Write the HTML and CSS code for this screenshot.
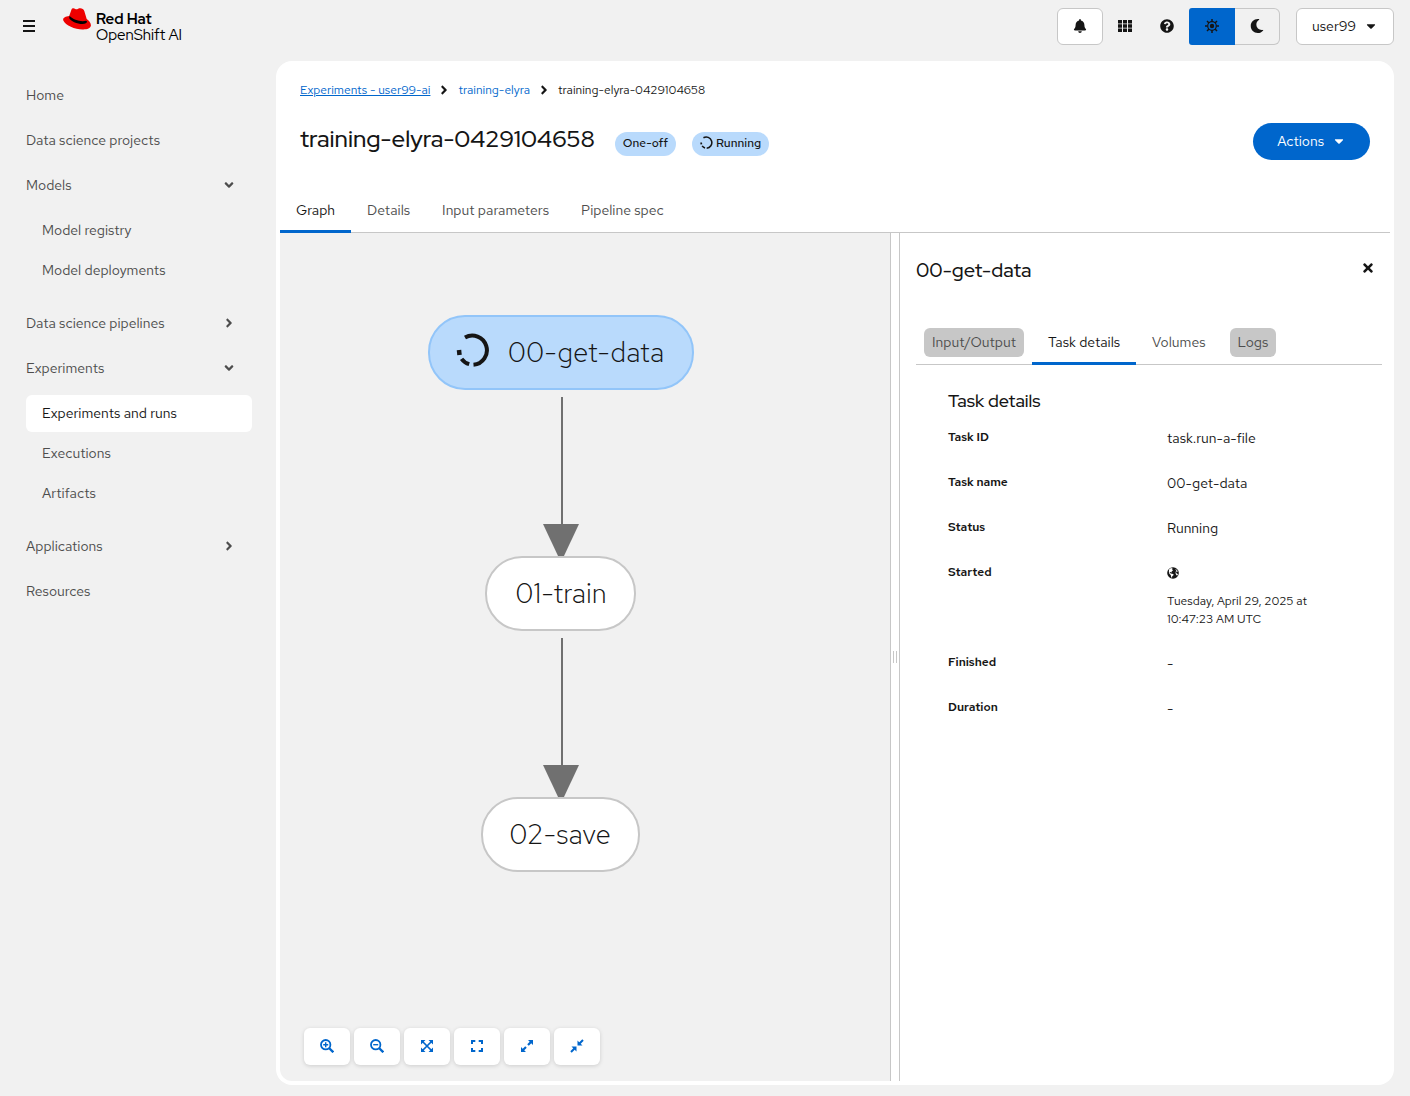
FILE: index.html
```html
<!DOCTYPE html>
<html lang="en">
<head>
    <meta charset="UTF-8">
    <meta name="viewport" content="width=device-width, initial-scale=1.0">
    <title>training-elyra-0429104658 | Red Hat OpenShift AI</title>
    <link rel="stylesheet" href="styles.css">
</head>
<body>
    <!-- icon set -->
    <svg class="sprite" aria-hidden="true">
        <symbol id="i-bars" viewBox="0 0 14 14"><path d="M1 2h12M1 7h12M1 12h12" stroke="currentColor" stroke-width="2"/></symbol>
        <symbol id="i-bell" viewBox="0 0 448 512"><path d="M224 512c35.32 0 63.97-28.65 63.97-64H160.03c0 35.35 28.65 64 63.97 64zm215.39-149.71c-19.32-20.76-55.47-51.99-55.47-154.29 0-77.7-54.48-139.9-127.94-155.16V32c0-17.67-14.32-32-31.98-32s-31.98 14.33-31.98 32v20.84C118.56 68.1 64.08 130.3 64.08 208c0 102.3-36.15 133.53-55.47 154.29-6 6.45-8.66 14.16-8.61 21.71.11 16.4 12.98 32 32.1 32h383.8c19.12 0 32-15.6 32.1-32 .05-7.55-2.61-15.27-8.61-21.71z"/></symbol>
        <symbol id="i-th" viewBox="0 0 14 14"><path d="M0 1h4v3.400H0zM5 1h4v3.400H5zM10 1h4v3.400h-4zM0 5.300h4v3.400H0zM5 5.300h4v3.400H5zM10 5.300h4v3.400h-4zM0 9.600h4V13H0zM5 9.600h4V13H5zM10 9.600h4V13h-4z"/></symbol>
        <symbol id="i-help" viewBox="0 0 512 512"><path d="M504 256c0 136.997-111.043 248-248 248S8 392.997 8 256C8 119.083 119.043 8 256 8s248 111.083 248 248zM262.655 90c-54.497 0-89.255 22.957-116.549 63.758-3.536 5.286-2.353 12.415 2.715 16.258l34.699 26.31c5.205 3.947 12.621 3.008 16.665-2.122 17.864-22.658 30.113-35.797 57.303-35.797 20.429 0 45.698 13.148 45.698 32.958 0 14.976-12.363 22.667-32.534 33.976C247.128 238.528 216 254.941 216 296v4c0 6.627 5.373 12 12 12h56c6.627 0 12-5.373 12-12v-1.333c0-28.462 83.186-29.647 83.186-106.667 0-58.002-60.165-102-116.531-102zM256 338c-25.365 0-46 20.635-46 46 0 25.364 20.635 46 46 46s46-20.636 46-46c0-25.365-20.635-46-46-46z"/></symbol>
        <symbol id="i-sun" viewBox="0 0 14 14"><circle cx="7" cy="7" r="2.200"/><circle cx="7" cy="7" r="4.300" fill="none" stroke="currentColor" stroke-width="1.200"/><path d="M7 0v2.500M7 11.500V14M0 7h2.500M11.500 7H14M2 2l2 2M10 10l2 2M12 2l-2 2M4 10l-2 2" stroke="currentColor" stroke-width="1.500"/></symbol>
        <symbol id="i-moon" viewBox="0 0 512 512"><path d="M283.211 512c78.962 0 151.079-35.925 198.857-94.792 7.068-8.708-.639-21.43-11.562-19.35-124.203 23.654-238.262-71.576-238.262-196.954 0-72.222 38.662-138.635 101.498-174.394 9.686-5.512 7.25-20.197-3.756-22.23A258.156 258.156 0 0 0 283.211 0c-141.309 0-256 114.511-256 256 0 141.309 114.511 256 256 256z"/></symbol>
        <symbol id="i-caret" viewBox="0 0 320 512"><path d="M31.3 192h257.3c17.8 0 26.7 21.5 14.1 34.1L174.1 354.8c-7.8 7.8-20.5 7.8-28.3 0L17.2 226.1C4.6 213.5 13.5 192 31.3 192z"/></symbol>
        <symbol id="i-right" viewBox="0 0 256 512"><path d="M224.3 273l-136 136c-9.4 9.4-24.6 9.4-33.9 0l-22.6-22.6c-9.4-9.4-9.4-24.6 0-33.9l96.4-96.4-96.4-96.4c-9.4-9.4-9.4-24.6 0-33.9L54.3 103c9.4-9.4 24.6-9.4 33.9 0l136 136c9.5 9.4 9.5 24.6.1 34z"/></symbol>
        <symbol id="i-down" viewBox="0 0 320 512"><path d="M143 352.3L7 216.3c-9.4-9.4-9.4-24.6 0-33.9l22.6-22.6c9.4-9.4 24.6-9.4 33.9 0l96.4 96.4 96.4-96.4c9.4-9.4 24.6-9.4 33.9 0l22.6 22.6c9.4 9.4 9.4 24.6 0 33.9l-136 136c-9.2 9.4-24.4 9.4-33.8 0z"/></symbol>
        <symbol id="i-times" viewBox="0 0 352 512"><path d="M242.72 256l100.07-100.07c12.28-12.28 12.28-32.19 0-44.48l-22.24-22.24c-12.28-12.28-32.19-12.28-44.48 0L176 189.28 75.93 89.21c-12.28-12.28-32.19-12.28-44.48 0L9.21 111.45c-12.28 12.28-12.28 32.19 0 44.48L109.28 256 9.21 356.07c-12.28 12.28-12.28 32.19 0 44.48l22.24 22.24c12.28 12.28 32.2 12.28 44.48 0L176 322.72l100.07 100.07c12.28 12.28 32.2 12.28 44.48 0l22.24-22.24c12.28-12.28 12.28-32.19 0-44.48L242.72 256z"/></symbol>
        <symbol id="i-globe" viewBox="0 0 12 12"><circle cx="6" cy="6" r="5.800"/><path d="M2 2.600l2-1.500 1.600.3-.4 1.300 1 .6-1.400 1-.2 1.200-1.400-.6-.6.7 1.200.8 2.400.6.5 1-1.500 1.200-.2 2-1-1.600-.2-1.600-1.300-1.100-.6-2zM8 2l2 1 .9 1.800-1.300-.3-.6 1 1 1.300 1 .2-.6 1.500-1-.2-.8-1.700.1-1.800.8-1z" fill="#fff"/></symbol>
        <symbol id="i-progress" viewBox="0 0 34 34"><g fill="none" stroke="currentColor" stroke-width="4"><path d="M9 4.600a14.600 14.600 0 1 1 8.500 27.200"/><path d="M13.200 31.200a14.500 14.500 0 0 1-7.600-5.400"/><path d="M3.500 22l-.5-5" stroke-width="4.500"/></g></symbol>
        <symbol id="i-zoom-in" viewBox="0 0 14 14"><g fill="none" stroke="currentColor"><circle cx="5.700" cy="5.700" r="4.700" stroke-width="1.800"/><path d="M3.200 5.700h5M5.700 3.200v5" stroke-width="1.400"/><path d="M9 9l4.300 4.300" stroke-width="2.300"/></g></symbol>
        <symbol id="i-zoom-out" viewBox="0 0 14 14"><g fill="none" stroke="currentColor"><circle cx="5.700" cy="5.700" r="4.700" stroke-width="1.800"/><path d="M3.200 5.700h5" stroke-width="1.400"/><path d="M9 9l4.300 4.300" stroke-width="2.300"/></g></symbol>
        <symbol id="i-fit" viewBox="0 0 14 14"><path d="M1 1h4.500L1 5.500zM13 1v4.500L8.500 1zM1 13V8.500L5.500 13zM13 13H8.500L13 8.500z"/><path d="M2.500 2.500l9 9M11.500 2.500l-9 9" stroke="currentColor" stroke-width="1.700"/></symbol>
        <symbol id="i-reset" viewBox="0 0 14 14"><path d="M2 5V2h3.300M8.700 2H12v3M12 9v3H8.700M5.300 12H2V9" fill="none" stroke="currentColor" stroke-width="2"/></symbol>
        <symbol id="i-expand" viewBox="0 0 14 14"><path d="M13 1v5L8 1zM1 13V8l5 5z"/><path d="M11.500 2.500L8 6M6 8l-3.500 3.500" stroke="currentColor" stroke-width="2.200"/></symbol>
        <symbol id="i-collapse" viewBox="0 0 14 14"><path d="M7.500 6.500v-5l5 5zM6.500 7.500v5l-5-5z"/><path d="M13 1L9 5M5 9l-4 4" stroke="currentColor" stroke-width="2"/></symbol>
    </svg>

    <header class="masthead">
        <button class="plain-btn menu-btn" aria-label="Toggle navigation"><svg class="icon"><use href="#i-bars"/></svg></button>
        <a class="brand" href="#">
            <svg class="brand-hat" viewBox="0 0 28 22" aria-hidden="true">
                <path fill="#e00" d="M8.500 1.500C9.500-.2 11 .3 12.300 1c1 .5 1.700.3 2.800-.3 2.500-1 5.300-.3 6.200 2.300l2.400 8c2.300 1.700 4.500 4.100 4.200 6.600-.4 3-4.200 4.100-8.400 3.900C12 21.200 2.400 17.400.3 12.400-.5 10 2.200 8.300 6.200 8z"/>
                <path d="M6.600 8c3.600 3.800 11.600 6.200 16.400 4.700l1.100.8c-.2 1.500-1.700 2.500-4.600 2.500-5.500 0-12-2.900-13.300-6.100z"/>
            </svg>
            <span class="brand-text">
                <strong>Red Hat</strong>
                <span>OpenShift AI</span>
            </span>
        </a>
        <div class="masthead-tools">
            <button class="boxed-btn" aria-label="Notifications"><svg class="icon"><use href="#i-bell"/></svg></button>
            <button class="plain-btn" aria-label="Applications"><svg class="icon"><use href="#i-th"/></svg></button>
            <button class="plain-btn" aria-label="Help"><svg class="icon"><use href="#i-help"/></svg></button>
            <div class="theme-toggle">
                <button class="active" aria-label="Light theme"><svg class="icon"><use href="#i-sun"/></svg></button>
                <button aria-label="Dark theme"><svg class="icon"><use href="#i-moon"/></svg></button>
            </div>
            <button class="boxed-btn user-btn">user99 <svg class="icon"><use href="#i-caret"/></svg></button>
        </div>
    </header>

    <div class="page">
        <nav class="sidebar">
            <a class="nav-link" href="#">Home</a>
            <a class="nav-link" href="#">Data science projects</a>
            <button class="nav-link" aria-expanded="true">Models <svg class="icon"><use href="#i-down"/></svg></button>
            <div class="nav-sub">
                <a class="nav-link" href="#">Model registry</a>
                <a class="nav-link" href="#">Model deployments</a>
            </div>
            <button class="nav-link" aria-expanded="false">Data science pipelines <svg class="icon"><use href="#i-right"/></svg></button>
            <button class="nav-link" aria-expanded="true">Experiments <svg class="icon"><use href="#i-down"/></svg></button>
            <div class="nav-sub">
                <a class="nav-link current" href="#">Experiments and runs</a>
                <a class="nav-link" href="#">Executions</a>
                <a class="nav-link" href="#">Artifacts</a>
            </div>
            <button class="nav-link" aria-expanded="false">Applications <svg class="icon"><use href="#i-right"/></svg></button>
            <a class="nav-link" href="#">Resources</a>
        </nav>

        <main class="content">
            <div class="content-head">
                <div class="breadcrumb">
                    <a class="hovered" href="#">Experiments - user99-ai</a>
                    <svg class="icon"><use href="#i-right"/></svg>
                    <a href="#">training-elyra</a>
                    <svg class="icon"><use href="#i-right"/></svg>
                    <span>training-elyra-0429104658</span>
                </div>
                <div class="title-row">
                    <h1>training-elyra-0429104658</h1>
                    <span class="label">One-off</span>
                    <span class="label"><svg class="icon"><use href="#i-progress"/></svg>Running</span>
                    <button class="actions-btn">Actions <svg class="icon"><use href="#i-caret"/></svg></button>
                </div>
            </div>

            <div class="tabs" role="tablist">
                <button class="tab active" role="tab"><span>Graph</span></button>
                <button class="tab" role="tab"><span>Details</span></button>
                <button class="tab" role="tab"><span>Input parameters</span></button>
                <button class="tab" role="tab"><span>Pipeline spec</span></button>
            </div>

            <div class="drawer">
                <div class="canvas">
                    <svg class="graph" role="img" aria-label="Pipeline graph">
                        <g class="edge">
                            <path d="M282 164v130" /><path class="arrow" d="M263 291h36l-16 34h-4z"/>
                            <path d="M282 405v130" /><path class="arrow" d="M263 532h36l-16 34h-4z"/>
                        </g>
                        <g class="node running">
                            <rect x="149" y="83" width="264" height="73" rx="36"/>
                            <svg x="176" y="100" width="34" height="34"><use href="#i-progress"/></svg>
                            <text x="306" y="129">00-get-data</text>
                        </g>
                        <g class="node">
                            <rect x="206" y="324" width="149" height="73" rx="36"/>
                            <text x="281" y="370">01-train</text>
                        </g>
                        <g class="node">
                            <rect x="202" y="565" width="157" height="73" rx="36"/>
                            <text x="280" y="611">02-save</text>
                        </g>
                    </svg>
                    <div class="canvas-tools">
                        <button aria-label="Zoom in"><svg class="icon"><use href="#i-zoom-in"/></svg></button>
                        <button aria-label="Zoom out"><svg class="icon"><use href="#i-zoom-out"/></svg></button>
                        <button aria-label="Fit to screen"><svg class="icon"><use href="#i-fit"/></svg></button>
                        <button aria-label="Reset view"><svg class="icon"><use href="#i-reset"/></svg></button>
                        <button aria-label="Expand all"><svg class="icon"><use href="#i-expand"/></svg></button>
                        <button aria-label="Collapse all"><svg class="icon"><use href="#i-collapse"/></svg></button>
                    </div>
                </div>

                <div class="splitter" role="separator"><span class="grip"></span></div>

                <aside class="panel">
                    <div class="panel-head">
                        <h2>00-get-data</h2>
                        <button class="close-btn" aria-label="Close"><svg class="icon"><use href="#i-times"/></svg></button>
                    </div>
                    <div class="tabs" role="tablist">
                        <button class="tab disabled" role="tab" disabled><span>Input/Output</span></button>
                        <button class="tab active" role="tab"><span>Task details</span></button>
                        <button class="tab" role="tab"><span>Volumes</span></button>
                        <button class="tab disabled" role="tab" disabled><span>Logs</span></button>
                    </div>
                    <section class="task">
                        <h3>Task details</h3>
                        <dl>
                            <dt>Task ID</dt>
                            <dd>task.run-a-file</dd>
                            <dt>Task name</dt>
                            <dd>00-get-data</dd>
                            <dt>Status</dt>
                            <dd>Running</dd>
                            <dt>Started</dt>
                            <dd>
                                <svg class="icon globe"><use href="#i-globe"/></svg>
                                <time>Tuesday, April 29, 2025 at <br>10:47:23 AM UTC</time>
                            </dd>
                            <dt>Finished</dt>
                            <dd>-</dd>
                            <dt>Duration</dt>
                            <dd>-</dd>
                        </dl>
                    </section>
                </aside>
            </div>
        </main>
    </div>
</body>
</html>
```
FILE: styles.css
```css
* {
    margin: 0;
    padding: 0;
    box-sizing: border-box;
}

body {
    min-height: 100vh;
    display: flex;
    flex-direction: column;
    background-color: #f1f1f1;
    color: #151515;
    font-family: "Red Hat Text", Inter, sans-serif;
    font-size: 14px;
    font-weight: 400;
    line-height: 21px;
}

button {
    border: none;
    background: none;
    color: inherit;
    font: inherit;
    cursor: pointer;
}

a {
    color: #0066cc;
    text-decoration: none;
}

.sprite {
    position: absolute;
    width: 0;
    height: 0;
}

.icon {
    width: 14px;
    height: 14px;
    flex: none;
    margin-bottom: 1px;
    fill: currentColor;
}

/* masthead */
.masthead {
    display: flex;
    align-items: flex-start;
    padding: 8px 16px 16px 8px;
}

.plain-btn,
.boxed-btn,
.theme-toggle button {
    height: 37px;
    display: flex;
    align-items: center;
    justify-content: center;
}

.plain-btn {
    width: 40px;
}

.menu-btn {
    width: 42px;
}

.boxed-btn {
    width: 46px;
    background-color: #fff;
    border: 1px solid #c7c7c7;
    border-radius: 6px;
}

.brand {
    display: flex;
    gap: 5px;
    margin-left: 13px;
    color: #000;
}

.brand-hat {
    width: 28px;
    height: 22px;
}

.brand-text {
    display: flex;
    flex-direction: column;
    padding-top: 3px;
    font-family: "Red Hat Display", "Red Hat Text", Inter, sans-serif;
    font-size: 15px;
    line-height: 16px;
}

.masthead-tools {
    display: flex;
    gap: 2px;
    margin-left: auto;
}

.theme-toggle {
    display: flex;
}

.theme-toggle button {
    width: 45px;
    border: 1px solid #c7c7c7;
    border-left: none;
    border-radius: 0 6px 6px 0;
}

.theme-toggle button.active {
    width: 46px;
    background-color: #0066cc;
    border: none;
    border-radius: 3px 0 0 3px;
}

.user-btn {
    width: auto;
    gap: 8px;
    margin-left: 14px;
    padding: 0 15px;
}

/* layout */
.page {
    flex: 1;
    display: flex;
    padding: 0 16px 11px 10px;
}

.sidebar {
    width: 242px;
    flex: none;
    display: flex;
    flex-direction: column;
    gap: 8px;
    margin-right: 24px;
    padding-top: 16px;
}

.nav-link {
    display: flex;
    align-items: center;
    justify-content: space-between;
    padding: 8px 16px;
    border-radius: 6px;
    color: #4d4d4d;
    text-align: left;
}

.nav-sub {
    display: flex;
    flex-direction: column;
    gap: 3px;
    padding: 0 0 8px 16px;
}

.nav-link.current {
    background-color: #fff;
    color: #151515;
}

.content {
    flex: 1;
    min-width: 0;
    display: flex;
    flex-direction: column;
    padding: 4px;
    background-color: #fff;
    border-radius: 16px;
}

.content-head {
    padding: 16px 20px 28px;
}

.breadcrumb {
    display: flex;
    align-items: center;
    gap: 7px;
    font-size: 12px;
    line-height: 18px;
}

.breadcrumb .hovered {
    text-decoration: underline;
}

.title-row {
    display: flex;
    align-items: center;
    gap: 16px;
    margin-top: 24px;
}

h1,
h2,
h3 {
    font-family: "Red Hat Display", "Red Hat Text", Inter, sans-serif;
    font-weight: 500;
}

h1 {
    padding: 0 4px 6px 0;
    font-size: 24px;
    line-height: 31px;
}

.label {
    display: flex;
    align-items: center;
    gap: 3px;
    margin-top: 4px;
    padding: 2px 8px 4px;
    background-color: #b9dafc;
    border-radius: 12px;
    font-size: 12px;
    font-weight: 500;
    line-height: 18px;
}

.label .icon {
    width: 13px;
    height: 13px;
}

.actions-btn {
    display: flex;
    align-items: center;
    gap: 8px;
    margin-left: auto;
    padding: 8px 24px;
    background-color: #0066cc;
    border-radius: 19px;
    color: #fff;
}

/* tabs */
.tabs {
    display: flex;
    border-bottom: 1px solid #c7c7c7;
}

.tab {
    margin-bottom: -1px;
    padding: 8px 8px 5px;
    border-bottom: 3px solid transparent;
    color: #4d4d4d;
}

.tab span {
    display: block;
    padding: 4px 8px;
    border-radius: 6px;
}

.tab.active {
    border-bottom-color: #0066cc;
    color: #151515;
}

.tab.disabled span {
    background-color: #c7c7c7;
}

/* graph and drawer */
.drawer {
    flex: 1;
    display: flex;
}

.canvas {
    flex: 1;
    position: relative;
    background-color: #f1f1f1;
    border-radius: 0 0 0 12px;
}

.graph {
    display: block;
    width: 100%;
    height: 100%;
    min-height: 720px;
}

.node rect {
    fill: #fff;
    stroke: #c7c7c7;
    stroke-width: 2;
}

.node.running rect {
    fill: #b9dafc;
    stroke: #92c5f9;
}

.node text {
    fill: #151515;
    font-size: 28px;
    font-weight: 300;
    text-anchor: middle;
}

.edge path {
    stroke: #707070;
    stroke-width: 2;
}

.edge .arrow {
    fill: #707070;
    stroke: none;
}

.canvas-tools {
    position: absolute;
    bottom: 16px;
    left: 24px;
    display: flex;
    gap: 4px;
}

.canvas-tools button {
    width: 46px;
    height: 37px;
    display: flex;
    align-items: center;
    justify-content: center;
    background-color: #fff;
    border-radius: 6px;
    box-shadow: 0 1px 4px rgba(0, 0, 0, 0.15);
    color: #0066cc;
}

.splitter {
    width: 10px;
    display: flex;
    align-items: center;
    justify-content: center;
    border: 1px solid #c7c7c7;
    border-width: 0 1px;
}

.grip {
    width: 4px;
    height: 12px;
    border: 1px solid #c7c7c7;
    border-width: 0 1px;
}

.panel {
    width: 490px;
    padding: 16px 8px 16px 16px;
}

.panel-head {
    display: flex;
    align-items: flex-start;
    justify-content: space-between;
    margin-bottom: 34px;
}

h2 {
    padding-top: 8px;
    font-size: 20px;
    line-height: 26px;
}

.close-btn {
    width: 28px;
    height: 37px;
    display: flex;
    align-items: center;
    justify-content: center;
}

.close-btn .icon {
    margin: 0;
}

.task {
    padding: 24px 32px;
}

h3 {
    font-size: 18px;
    line-height: 24px;
}

dl {
    display: grid;
    grid-template-columns: 1fr 1fr;
    gap: 24px 36px;
    margin-top: 15px;
}

dt {
    font-size: 12px;
    font-weight: 600;
    line-height: 18px;
}

.globe {
    display: block;
    width: 12px;
    height: 12px;
    margin: 4px 0 13px;
}

time {
    display: block;
    padding-bottom: 1px;
    font-size: 12px;
    line-height: 18px;
}
```
